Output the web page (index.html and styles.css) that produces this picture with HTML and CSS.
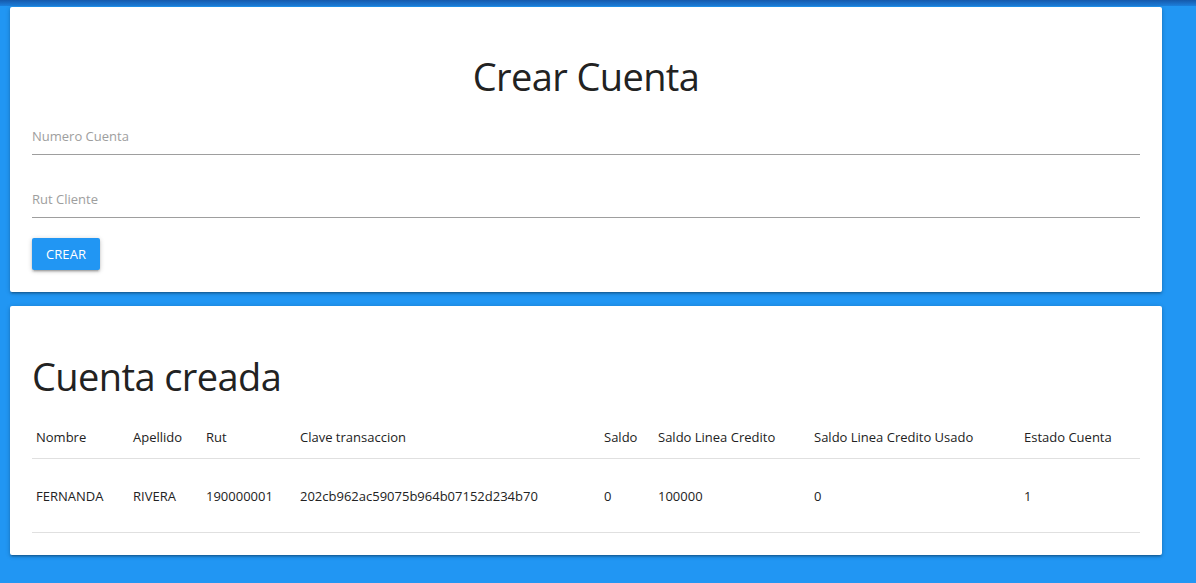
FILE: index.html
```html
<!DOCTYPE html>
<html lang="es">
<head>
<meta charset="utf-8">
<title>Crear Cuenta</title>
<link rel="stylesheet" href="styles.css">
</head>
<body>
<div class="topbar"></div>
<main class="page">
  <section class="card">
    <h1 class="title title-center">Crear Cuenta</h1>
    <form class="form">
      <input class="field" type="text" placeholder="Numero Cuenta">
      <input class="field field-2" type="text" placeholder="Rut Cliente">
      <button class="btn" type="button">CREAR</button>
    </form>
  </section>
  <section class="card card-2">
    <h2 class="title">Cuenta creada</h2>
    <table class="table">
      <colgroup>
        <col class="c1"><col class="c2"><col class="c3"><col class="c4">
        <col class="c5"><col class="c6"><col class="c7"><col class="c8">
      </colgroup>
      <thead>
        <tr>
          <th>Nombre</th><th>Apellido</th><th>Rut</th><th>Clave transaccion</th>
          <th>Saldo</th><th>Saldo Linea Credito</th><th>Saldo Linea Credito Usado</th><th>Estado Cuenta</th>
        </tr>
      </thead>
      <tbody>
        <tr>
          <td>FERNANDA</td><td>RIVERA</td><td>190000001</td><td>202cb962ac59075b964b07152d234b70</td>
          <td>0</td><td>100000</td><td>0</td><td>1</td>
        </tr>
      </tbody>
    </table>
  </section>
</main>
</body>
</html>
```
FILE: styles.css
```css
html, body {
  margin: 0;
  padding: 0;
}
body {
  background: #2196f3;
  font-family: "Open Sans", "Noto Sans", sans-serif;
  color: rgba(0, 0, 0, 0.87);
  height: 583px;
  overflow: hidden;
}
.topbar {
  height: 6px;
  background: linear-gradient(#1559ab, #1c7fdc);
}
.page {
  padding: 1px 34px 0 10px;
}
.card {
  background: #fff;
  border-radius: 2px;
  padding: 22px;
  box-shadow: 0 2px 2px 0 rgba(0,0,0,.14), 0 3px 1px -2px rgba(0,0,0,.12), 0 1px 5px 0 rgba(0,0,0,.2);
  margin-bottom: 14px;
}
.title {
  margin: 23px 0 0;
  font-size: 38px;
  line-height: 48px;
  letter-spacing: -0.6px;
  font-weight: 400;
  color: #222;
}
.title-center {
  text-align: center;
}
.form {
  display: flex;
  flex-direction: column;
  align-items: flex-start;
}
.field {
  box-sizing: content-box;
  width: 100%;
  height: 36px;
  margin: 18px 0 0;
  padding: 0;
  border: none;
  border-bottom: 1px solid #9e9e9e;
  outline: none;
  font-family: inherit;
  font-size: 13px;
  color: #222;
  background: transparent;
}
.field::placeholder {
  color: #9e9e9e;
}
.field-2 {
  margin-top: 26px;
}
.btn {
  margin-top: 20px;
  height: 32px;
  width: 68px;
  padding: 0;
  border: none;
  border-radius: 2px;
  background: #2196f3;
  color: #fff;
  font-family: inherit;
  font-size: 13px;
  letter-spacing: 0.1px;
  box-shadow: 0 2px 2px 0 rgba(0,0,0,.14), 0 3px 1px -2px rgba(0,0,0,.12), 0 1px 5px 0 rgba(0,0,0,.2);
}
.card-2 .title {
  margin-top: 24px;
}
.table {
  width: 100%;
  margin-top: 15px;
  table-layout: fixed;
  border-collapse: collapse;
  font-size: 13px;
}
.table tr {
  border-bottom: 1px solid rgba(0, 0, 0, 0.12);
}
.table th, .table td {
  padding: 0 4px;
  text-align: left;
  font-weight: 400;
  white-space: nowrap;
  vertical-align: middle;
  color: #222;
}
.table th {
  height: 43px;
}
.table td {
  height: 73px;
}
.c1 { width: 97px; }
.c2 { width: 73px; }
.c3 { width: 94px; }
.c4 { width: 304px; }
.c5 { width: 54px; }
.c6 { width: 156px; }
.c7 { width: 210px; }
.c8 { width: 120px; }
```
